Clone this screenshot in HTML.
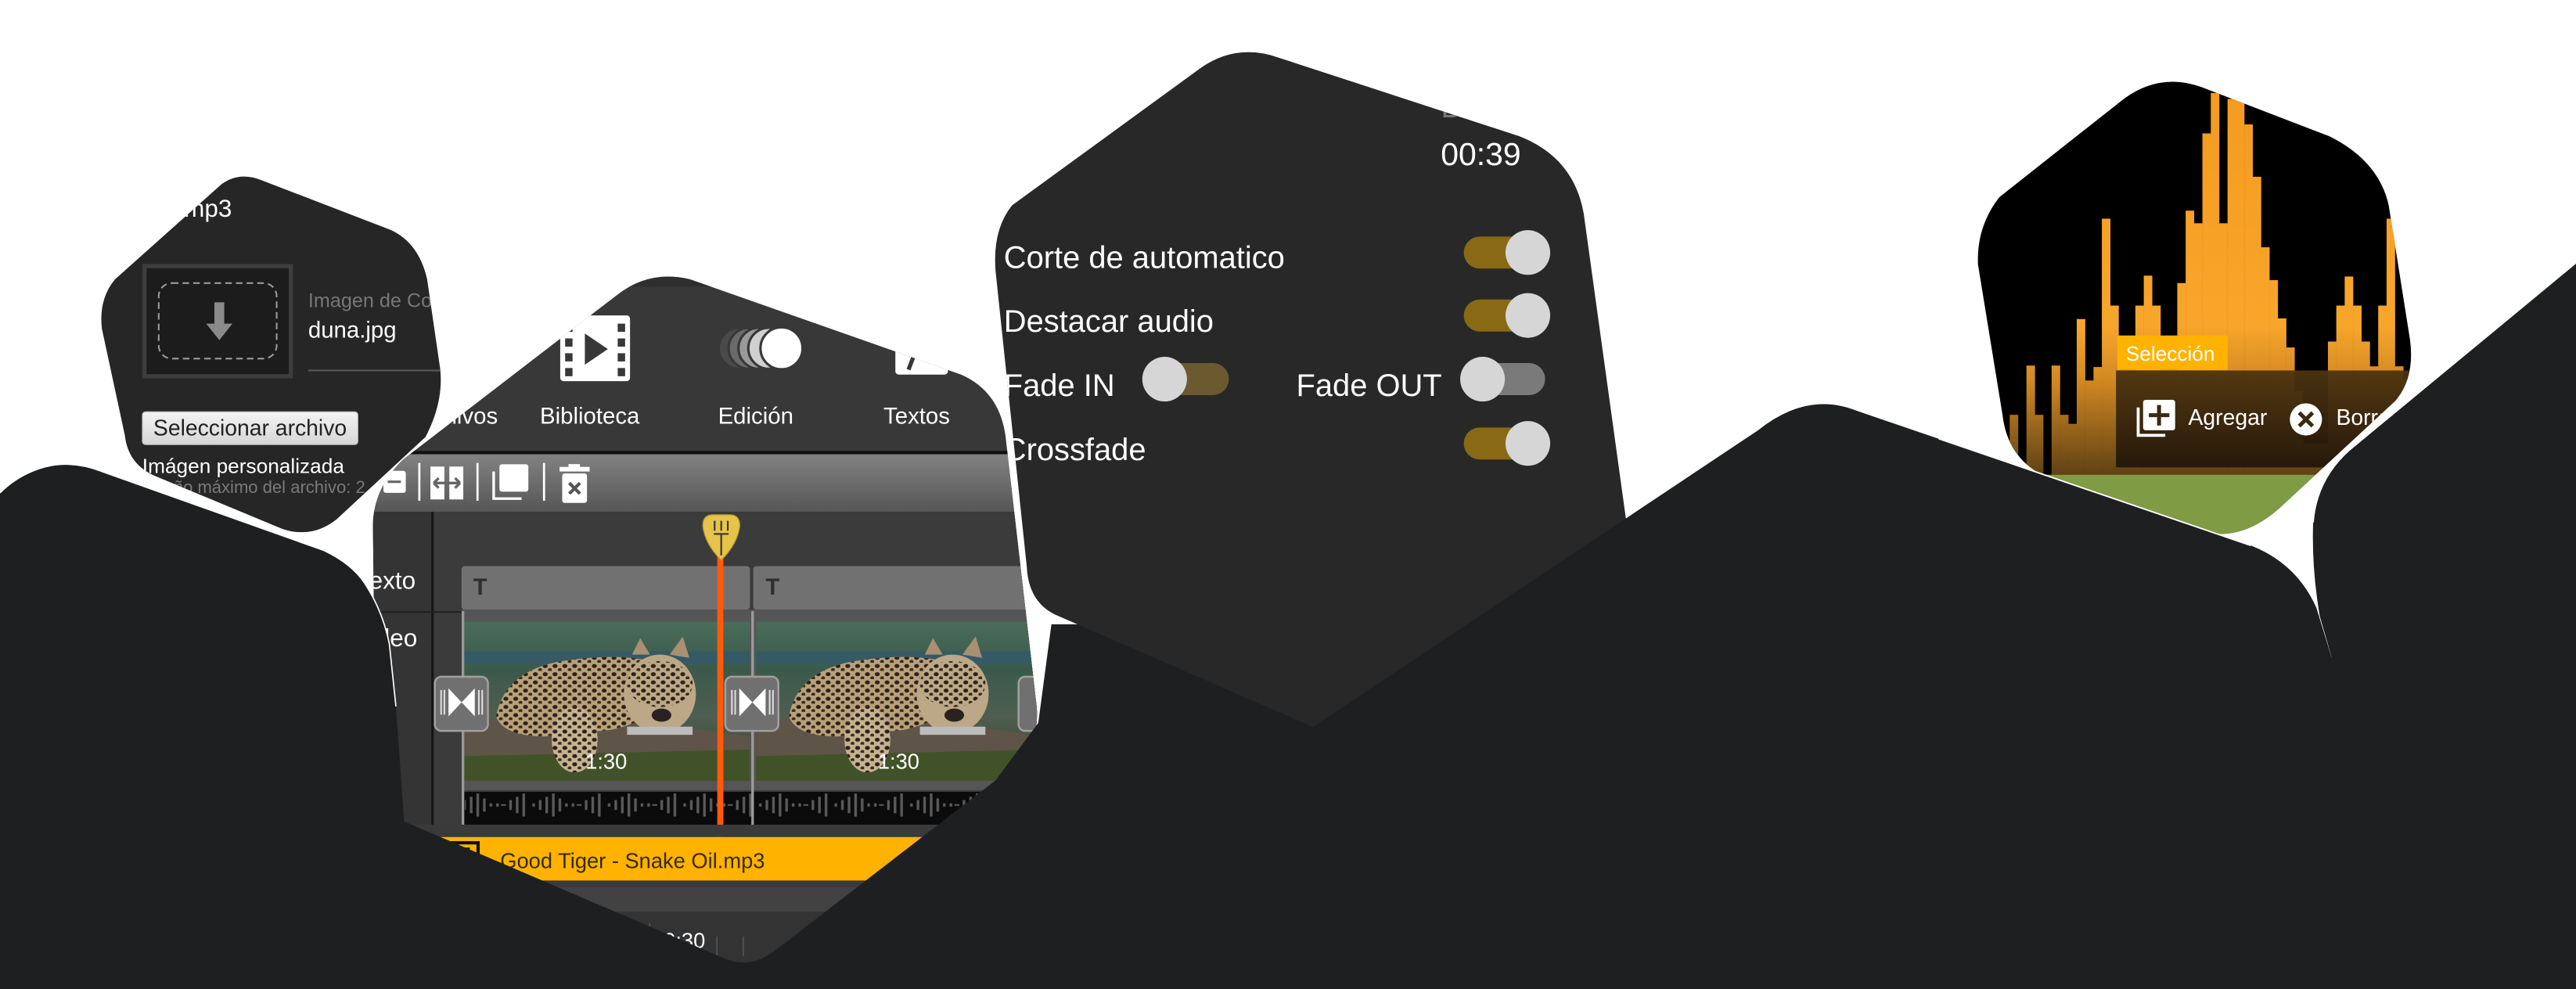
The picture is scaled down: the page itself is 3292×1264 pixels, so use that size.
<!DOCTYPE html>
<html><head><meta charset="utf-8"><style>
html,body{margin:0;padding:0;background:#fff;overflow:hidden;width:3292px;height:1264px}
svg{display:block}
text{font-family:"Liberation Sans",sans-serif}
</style></head><body>
<svg width="3292" height="1264" viewBox="0 0 1568 602" preserveAspectRatio="none" xmlns="http://www.w3.org/2000/svg">
<defs>
<clipPath id="c1"><path d="M70,170 L135,112 Q146,104 160,110 L238,140 Q255,148 260,170 L268,225 Q270,245 259,266 L205,316 Q190,328 172,322 L95,290 Q78,283 76,265 L62,200 Q60,182 70,170 Z"/></clipPath>
<clipPath id="c2"><path d="M227,320 Q227,298 245,280 L375,180 Q395,164 420,170 L585,228 Q608,238 612,265 L631,430 Q633,455 615,472 L480,580 Q455,597 430,587 L250,510 Q230,500 229,480 Z"/></clipPath>
<clipPath id="c3"><path d="M606,165 Q604,140 616,125 L730,42 Q752,26 778,35 L925,83 Q958,96 964,130 L990,318 Q993,340 978,352 L850,440 Q828,455 805,445 L642,374 Q626,366 625,345 Z"/></clipPath>
<clipPath id="c4"><path d="M1217,120 L1293,60 Q1315,44 1340,53 L1418,83 Q1448,98 1454,125 L1467,207 Q1470,230 1458,244 L1390,307 Q1370,326 1349,325 Q1330,325 1300,312 L1243,289 Q1222,278 1219,253 L1204,161 Q1203,138 1217,120 Z"/></clipPath>
<linearGradient id="tb" x1="0" y1="0" x2="0" y2="1"><stop offset="0" stop-color="#828282"/><stop offset="1" stop-color="#565656"/></linearGradient>
<linearGradient id="btn" x1="0" y1="0" x2="0" y2="1"><stop offset="0" stop-color="#f4f4f4"/><stop offset="1" stop-color="#d6d6d6"/></linearGradient>
<linearGradient id="org" gradientUnits="userSpaceOnUse" x1="0" y1="45" x2="0" y2="292"><stop offset="0" stop-color="#f39a1f"/><stop offset="0.62" stop-color="#f8a62b"/><stop offset="0.75" stop-color="#d48a22"/><stop offset="1" stop-color="#5a3d14"/></linearGradient>
<linearGradient id="pan" x1="0" y1="0" x2="0" y2="1"><stop offset="0" stop-color="#4c3410"/><stop offset="1" stop-color="#22160a"/></linearGradient>
<linearGradient id="leo" x1="0" y1="0" x2="0" y2="1"><stop offset="0" stop-color="#4a6c58"/><stop offset="0.3" stop-color="#3a5a4c"/><stop offset="0.6" stop-color="#4f5e50"/><stop offset="1" stop-color="#35402a"/></linearGradient>
<pattern id="spots" width="6" height="5" patternUnits="userSpaceOnUse"><ellipse cx="2" cy="2" rx="1.5" ry="1.2" fill="#2b2118"/><ellipse cx="5" cy="4.3" rx="1.3" ry="1" fill="#3a2c1e"/></pattern>
<pattern id="wave" width="46" height="20" patternUnits="userSpaceOnUse">
<g fill="#5a5a5a"><rect x="2" y="9" width="1.6" height="2"/><rect x="6" y="7" width="1.6" height="6"/><rect x="10" y="5" width="1.6" height="10"/><rect x="14" y="3" width="1.6" height="14"/><rect x="18" y="6" width="1.6" height="8"/><rect x="22" y="9" width="1.6" height="2"/><rect x="26" y="9" width="1.6" height="2"/><rect x="29" y="9.5" width="3" height="1"/><rect x="34" y="7" width="1.6" height="6"/><rect x="38" y="5" width="1.6" height="10"/><rect x="42" y="3" width="1.6" height="14"/></g></pattern>
<symbol id="leopard" viewBox="0 0 175 97">
<rect width="175" height="97" fill="url(#leo)"/>
<rect y="18" width="175" height="8" fill="#355a66"/>
<path d="M0,62 Q60,52 120,62 L175,70 L175,97 L0,97 Z" fill="#5e5448"/>
<path d="M0,82 L175,78 L175,97 L0,97 Z" fill="#425228"/>
<path d="M20,58 Q25,30 60,24 Q100,18 120,26 L130,40 Q118,60 90,66 L50,70 Q25,70 20,58 Z" fill="#b8a07a"/>
<path d="M20,58 Q25,30 60,24 Q100,18 120,26 L130,40 Q118,60 90,66 L50,70 Q25,70 20,58 Z" fill="url(#spots)"/>
<ellipse cx="68" cy="72" rx="14" ry="20" fill="#c4b292"/>
<ellipse cx="68" cy="72" rx="14" ry="20" fill="url(#spots)"/>
<ellipse cx="120" cy="44" rx="22" ry="24" fill="#bca886"/>
<ellipse cx="120" cy="38" rx="20" ry="14" fill="url(#spots)"/>
<path d="M103,20 L108,10 L114,20 Z M126,20 L134,9 L138,22 Z" fill="#a89070"/>
<ellipse cx="121" cy="57" rx="6" ry="4" fill="#2a2220"/>
<rect x="100" y="64" width="40" height="5" fill="#bcbcbc"/>
</symbol>
</defs>

<rect width="1568" height="602" fill="#fff"/>

<g clip-path="url(#c1)">
<rect x="55" y="100" width="220" height="230" fill="#262626"/>
<text x="112" y="132" font-size="15" fill="#fff">mp3</text>
<rect x="88" y="162" width="89" height="67" fill="#1c1c1c" stroke="#3e3e3e" stroke-width="2.5"/>
<rect x="96.6" y="172.3" width="71.8" height="46" rx="8" fill="none" stroke="#9a9a9a" stroke-width="1" stroke-dasharray="4 2.5"/>
<path d="M130.5,184 h6 v13 h5 l-8,10 l-8,-10 h5 Z" fill="#8a8a8a"/>
<text x="187.6" y="187" font-size="12" fill="#777">Imagen de Co</text>
<text x="187.6" y="205.5" font-size="14" fill="#fff">duna.jpg</text>
<rect x="187.6" y="225" width="90" height="1" fill="#5a5a5a"/>
<rect x="86.6" y="250.6" width="131.3" height="20.1" rx="2" fill="url(#btn)" stroke="#aaa" stroke-width="0.5"/>
<text x="152.2" y="265" font-size="13.5" fill="#222" text-anchor="middle">Seleccionar archivo</text>
<text x="86.6" y="288" font-size="12.5" fill="#fff">Imágen personalizada</text>
<text x="80" y="300" font-size="10.5" fill="#7a7a7a">Tamaño máximo del archivo: 2</text>
</g>

<g clip-path="url(#c2)">
<rect x="220" y="160" width="420" height="450" fill="#383838"/>
<rect x="220" y="160" width="420" height="14.5" fill="#2e2e2e"/>
<rect x="341" y="192" width="42.5" height="40" rx="2" fill="#fff"/>
<g fill="#383838"><rect x="344" y="197" width="4.5" height="5"/><rect x="344" y="206" width="4.5" height="5"/><rect x="344" y="215" width="4.5" height="5"/><rect x="344" y="224" width="4.5" height="5"/>
<rect x="376" y="197" width="4.5" height="5"/><rect x="376" y="206" width="4.5" height="5"/><rect x="376" y="215" width="4.5" height="5"/><rect x="376" y="224" width="4.5" height="5"/>
<path d="M356,203 L356,222 L370,212.5 Z"/></g>
<g stroke="#383838" stroke-width="1.5"><circle cx="450" cy="212" r="12.5" fill="#4a4a4a"/><circle cx="456" cy="212" r="12.5" fill="#6a6a6a"/><circle cx="462" cy="212" r="12.5" fill="#9a9a9a"/><circle cx="468" cy="212" r="12.5" fill="#d0d0d0"/><circle cx="475.7" cy="212" r="12.8" fill="#fff"/></g>
<rect x="545" y="200" width="32" height="28" rx="2" fill="#fff"/>
<path d="M553,225 L558,212" stroke="#383838" stroke-width="2.5"/>
<g font-size="14" fill="#fff"><text x="303" y="258" text-anchor="end">Archivos</text><text x="359" y="258" text-anchor="middle">Biblioteca</text><text x="460" y="258" text-anchor="middle">Edición</text><text x="558" y="258" text-anchor="middle">Textos</text></g>
<rect x="220" y="274.5" width="420" height="2" fill="#111"/>
<rect x="220" y="276.5" width="420" height="35" fill="url(#tb)"/>
<rect x="233.4" y="286.6" width="13.6" height="13.4" rx="1.5" fill="#fff"/>
<rect x="236" y="292.5" width="8" height="1.5" fill="#666"/>
<rect x="254.6" y="281.8" width="1.3" height="23" fill="#fff"/>
<rect x="262" y="284" width="8.5" height="20" fill="#fff"/><rect x="273.5" y="284" width="8.5" height="20" fill="#fff"/>
<path d="M264,294 h16 M264,294 l3,-3 M264,294 l3,3 M280,294 l-3,-3 M280,294 l-3,3" stroke="#666" stroke-width="1.6" fill="none"/>
<rect x="290" y="281.8" width="1.3" height="23" fill="#fff"/>
<path d="M300.5,287 V303.5 H317.5" stroke="#fff" stroke-width="1.6" fill="none"/>
<rect x="304" y="282.6" width="17.6" height="16.7" rx="1.5" fill="#fff"/>
<rect x="330.5" y="281.8" width="1.3" height="23" fill="#fff"/>
<rect x="340.6" y="284.2" width="18.3" height="2.8" fill="#fff"/><rect x="346" y="282.5" width="7" height="2" fill="#fff"/>
<rect x="342.2" y="288.2" width="15.1" height="17.9" rx="1.5" fill="#fff"/>
<path d="M346.5,294 l6.5,6.5 M353,294 l-6.5,6.5" stroke="#555" stroke-width="2"/>
<rect x="220" y="311.5" width="420" height="200" fill="#3b3b3b"/>
<rect x="220" y="311.5" width="43" height="200" fill="#343434"/>
<rect x="262.5" y="311.5" width="1.5" height="200" fill="#161616"/>
<rect x="220" y="372" width="420" height="1" fill="#222"/>
<text x="253" y="358.5" font-size="15" fill="#fff" text-anchor="end">Texto</text>
<text x="254" y="393.5" font-size="15" fill="#fff" text-anchor="end">Video</text>
<rect x="280.9" y="344.6" width="175.6" height="26.5" rx="2" fill="#717171"/>
<rect x="458.5" y="344.6" width="180" height="26.5" rx="2" fill="#717171"/>
<text x="288" y="362" font-size="14" font-weight="bold" fill="#2e2e2e" font-family="Liberation Serif, serif">T</text>
<text x="466" y="362" font-size="14" font-weight="bold" fill="#2e2e2e" font-family="Liberation Serif, serif">T</text>
<rect x="281" y="371" width="359" height="110" fill="#555"/>
<use href="#leopard" x="282" y="378.3" width="174.5" height="97.1"/>
<use href="#leopard" x="460.2" y="378.3" width="174.5" height="97.1"/>
<text x="369" y="468" font-size="13" fill="#fff" text-anchor="middle">1:30</text>
<text x="547" y="468" font-size="13" fill="#fff" text-anchor="middle">1:30</text>
<rect x="281" y="482" width="359" height="20" fill="#0b0b0b"/>
<rect x="283" y="482" width="357" height="20" fill="url(#wave)"/>
<rect x="281" y="372" width="1.6" height="130" fill="#9a9a9a"/>
<rect x="457.3" y="372" width="1.6" height="130" fill="#9a9a9a"/>
<g>
<rect x="264.7" y="411.9" width="32.3" height="33" rx="4" fill="#707070" stroke="#a0a0a0" stroke-width="1.2"/>
<path d="M273,419 L289,436 L289,419 L273,436 Z" fill="#fff"/><rect x="268" y="420" width="1" height="15" fill="#ddd"/><rect x="270" y="420" width="1" height="15" fill="#ddd"/><rect x="291" y="420" width="1" height="15" fill="#ddd"/><rect x="293" y="420" width="1" height="15" fill="#ddd"/>
<rect x="441.5" y="411.9" width="32.3" height="33" rx="4" fill="#707070" stroke="#a0a0a0" stroke-width="1.2"/>
<path d="M450,419 L466,436 L466,419 L450,436 Z" fill="#fff"/><rect x="445" y="420" width="1" height="15" fill="#ddd"/><rect x="447" y="420" width="1" height="15" fill="#ddd"/><rect x="468" y="420" width="1" height="15" fill="#ddd"/><rect x="470" y="420" width="1" height="15" fill="#ddd"/>
<rect x="620" y="411.9" width="32.3" height="33" rx="4" fill="#707070" stroke="#a0a0a0" stroke-width="1.2"/>
</g>
<rect x="436.6" y="330" width="3.7" height="183" fill="#ff5a0a"/>
<path d="M427.8,320 Q427.8,313.3 434,313.3 H444 Q450.3,313.3 450.3,320 Q449,331 439,341 Q429,331 427.8,320 Z" fill="#e6c44a" stroke="#b59a30" stroke-width="0.6"/>
<path d="M435,317 v6 M439,317 v6 M443,317 v6 M434.5,325 h9 M439,325 v13" stroke="#333" stroke-width="1"/>
<rect x="220" y="502" width="420" height="7.5" fill="#3a3a3a"/>
<rect x="220" y="509.5" width="420" height="26.5" fill="#ffb300"/>
<rect x="267" y="513" width="24" height="20" fill="none" stroke="#111" stroke-width="2"/>
<path d="M272,517 h14 M279,517 v14" stroke="#111" stroke-width="2.2"/>
<text x="304.5" y="528.4" font-size="13" fill="#3a2a00">Good Tiger - Snake Oil.mp3</text>
<rect x="220" y="536" width="420" height="4" fill="#3a3a3a"/>
<rect x="220" y="540" width="420" height="15" fill="#424242"/>
<rect x="220" y="555" width="420" height="50" fill="#333"/>
<rect x="395" y="562" width="0.8" height="20" fill="#555"/><rect x="380" y="570" width="0.8" height="12" fill="#555"/><rect x="436" y="570" width="0.8" height="12" fill="#555"/><rect x="452" y="570" width="0.8" height="12" fill="#555"/>
<text x="404" y="577" font-size="13" fill="#fff">0:30</text>
</g>

<path d="M0,300 C12,288 28,282 42,282.6 Q52,283 62,287 L197,335 Q214,343 222,355 Q233,372 237,392 L241,430 L246,500 L440,583 Q455,590 470,580 L606,475 L632,440 L640,380 L700,380 L1568,420 L1568,602 L0,602 Z" fill="#1e1f21"/>
<path d="M0,300 C12,288 28,282 42,282.6 Q52,283 62,287 L197,335 Q214,343 222,355 Q233,372 237,392 L241,430" fill="none" stroke="#fff" stroke-width="0.8"/>

<g clip-path="url(#c3)">
<rect x="600" y="20" width="400" height="440" fill="#282828"/>
<text x="877" y="71.5" font-size="19.5" fill="#777">D</text>
<text x="877" y="100.5" font-size="19.5" fill="#fff">00:39</text>
<g font-size="19" fill="#fff">
<text x="611" y="163.2">Corte de automatico</text>
<text x="611" y="202">Destacar audio</text>
<text x="611" y="241">Fade IN</text>
<text x="789" y="241">Fade OUT</text>
<text x="611" y="280">Crossfade</text>
</g>
<g>
<rect x="891" y="144" width="40" height="19.5" rx="9.7" fill="#8a6914"/><circle cx="930" cy="153.7" r="13.6" fill="#d6d6d6"/>
<rect x="891" y="182.3" width="40" height="19.5" rx="9.7" fill="#8a6914"/><circle cx="930" cy="192" r="13.6" fill="#d6d6d6"/>
<rect x="707" y="221" width="41" height="19.5" rx="9.7" fill="#6b5a30"/><circle cx="708.9" cy="230.8" r="13.6" fill="#d6d6d6"/>
<rect x="900" y="221" width="40.5" height="19.5" rx="9.7" fill="#7a7a7a"/><circle cx="902.4" cy="230.8" r="13.6" fill="#d6d6d6"/>
<rect x="891" y="260.2" width="40" height="19.5" rx="9.7" fill="#8a6914"/><circle cx="930" cy="269.9" r="13.6" fill="#d6d6d6"/>
</g>
</g>

<g clip-path="url(#c4)">
<rect x="1195" y="40" width="280" height="300" fill="#000"/>
<g fill="url(#org)">
<rect x="1223.3" y="252.5" width="5.2" height="38"/><rect x="1233.5" y="222.5" width="5.2" height="68"/><rect x="1238.6" y="252.5" width="5.2" height="38"/>
<rect x="1248.8" y="222.5" width="5.2" height="68"/><rect x="1253.9" y="252.5" width="5.2" height="38"/><rect x="1259" y="258" width="5.2" height="33"/>
<rect x="1264.1" y="194.2" width="5.2" height="97"/><rect x="1269.2" y="231.6" width="5.2" height="60"/><rect x="1274.3" y="223.4" width="5.2" height="68"/>
<rect x="1279.4" y="133.1" width="5.2" height="158"/><rect x="1284.5" y="186" width="5.2" height="105"/><rect x="1289.6" y="225.2" width="10.3" height="66"/>
<rect x="1299.8" y="186" width="5.2" height="105"/><rect x="1304.9" y="167.8" width="5.2" height="123"/><rect x="1310" y="186" width="5.2" height="105"/>
<rect x="1315.1" y="225.2" width="10.3" height="66"/><rect x="1325.3" y="172.3" width="5.2" height="119"/><rect x="1330.4" y="128.2" width="5.2" height="163"/>
<rect x="1335.5" y="135.9" width="5.2" height="155"/><rect x="1340.6" y="81.2" width="5.2" height="210"/><rect x="1345.7" y="56.6" width="5.2" height="235"/>
<rect x="1350.8" y="135.9" width="5.2" height="155"/><rect x="1355.9" y="60.2" width="10.3" height="231"/><rect x="1366.1" y="75.7" width="5.2" height="216"/>
<rect x="1371.2" y="107.6" width="5.2" height="184"/><rect x="1376.3" y="150.5" width="5.2" height="141"/><rect x="1381.4" y="170.5" width="5.2" height="121"/>
<rect x="1386.5" y="193.8" width="5.2" height="98"/><rect x="1391.6" y="211.5" width="5.2" height="80"/><rect x="1396.7" y="238" width="5.2" height="54"/>
<rect x="1401.8" y="269.9" width="15.4" height="22"/>
<rect x="1417" y="207.9" width="5.2" height="84"/><rect x="1422.1" y="186" width="5.2" height="106"/><rect x="1427.2" y="168.3" width="5.2" height="124"/>
<rect x="1432.3" y="186" width="5.2" height="106"/><rect x="1437.4" y="207.9" width="5.2" height="84"/><rect x="1442.5" y="223" width="5.2" height="69"/>
<rect x="1447.6" y="186" width="5.2" height="106"/><rect x="1452.7" y="133.1" width="5.2" height="159"/><rect x="1457.8" y="223" width="5.2" height="69"/><rect x="1462.9" y="230.7" width="6" height="61"/>
</g>
<rect x="1195" y="289" width="280" height="50" fill="#7f9b43"/>
<rect x="1288" y="225.5" width="180" height="59" fill="url(#pan)" opacity="0.95"/>
<rect x="1288.8" y="204.2" width="67.2" height="21" fill="#ffb300"/>
<text x="1294" y="219.5" font-size="12.5" fill="#fff">Selección</text>
<path d="M1301.5,248 V265 H1318" stroke="#fff" stroke-width="1.8" fill="none"/>
<rect x="1304.5" y="243.4" width="19.5" height="18.5" rx="1.5" fill="#fff"/>
<path d="M1314.2,246.5 v12.5 M1308,252.7 h12.5" stroke="#3a2a10" stroke-width="2.4"/>
<text x="1332" y="258.5" font-size="13.5" fill="#fff">Agregar</text>
<circle cx="1403.6" cy="255.3" r="9.8" fill="#fff"/>
<path d="M1399.5,251.2 l8.2,8.2 M1407.7,251.2 l-8.2,8.2" stroke="#3a2a10" stroke-width="2.4"/>
<text x="1422" y="258.5" font-size="13.5" fill="#fff">Borrar</text>
</g>

<path d="M560,602 L1070,262 Q1100,238 1130,250 L1370,332 Q1398,343 1410,370 L1421,406 L1421,602 Z" fill="#1e1f21"/>
<path d="M1180,267 L1370,332" stroke="#fff" stroke-width="0.9" fill="none"/>

<path d="M1568,160 L1430,274 Q1410,292 1408,318 Q1407,345 1412,375 L1421,406 L1421,602 L1568,602 Z" fill="#1e1f21"/>
<path d="M1568,160 L1430,274 Q1410,292 1408,318" fill="none" stroke="#fff" stroke-width="0.8"/>
<rect x="1418" y="400" width="150" height="202" fill="#1e1f21"/>
</svg>
</body></html>
